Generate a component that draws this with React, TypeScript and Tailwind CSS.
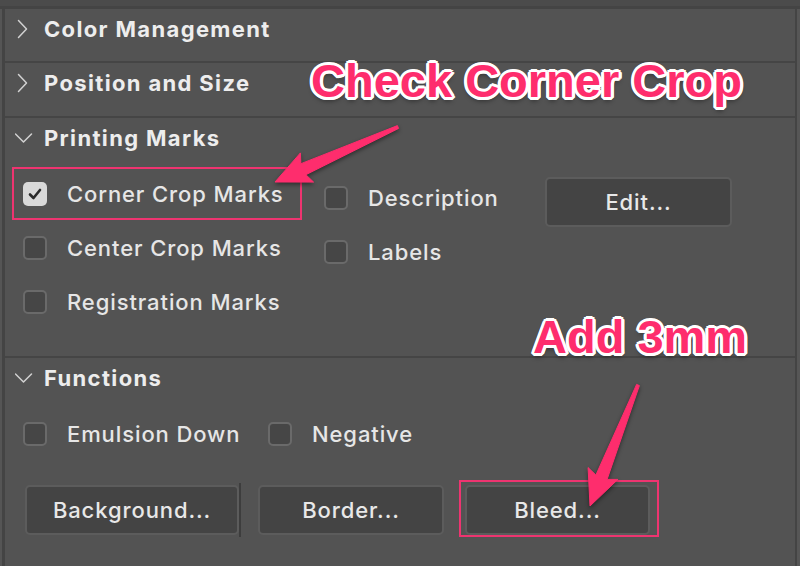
import React from "react";

function ChevronRight() {
  return (
    <svg width="22" height="22" viewBox="0 0 22 22" fill="none">
      <path d="M3.5 2.5 L11.5 11 L3.5 19.5" stroke="#d2d2d2" strokeWidth="1.5" strokeLinecap="round" strokeLinejoin="round" />
    </svg>
  );
}

function ChevronDown() {
  return (
    <svg width="22" height="22" viewBox="0 0 22 22" fill="none">
      <path d="M0.5 7 L8.5 15 L16.5 7" stroke="#d2d2d2" strokeWidth="1.5" strokeLinecap="round" strokeLinejoin="round" />
    </svg>
  );
}

function Checkbox({ checked }: { checked?: boolean }) {
  if (checked) {
    return (
      <div className="w-[24px] h-[24px] rounded-[5px] bg-[#d9d9d9] flex items-center justify-center shrink-0">
        <svg width="16" height="16" viewBox="0 0 16 16" fill="none">
          <path d="M3 8.5 L6.5 12 L13 4" stroke="#2b2b2b" strokeWidth="2.6" strokeLinecap="round" strokeLinejoin="round" />
        </svg>
      </div>
    );
  }
  return <div className="w-[24px] h-[24px] rounded-[5px] bg-[#464646] border-2 border-[#6a6a6a] shrink-0" />;
}

function CheckRow({ label, checked }: { label: string; checked?: boolean }) {
  return (
    <div className="h-[54px] flex items-center gap-[20px]">
      <Checkbox checked={checked} />
      <span className="text-[22px] tracking-[0.9px] font-[450] text-[#e6e6e6] whitespace-nowrap">{label}</span>
    </div>
  );
}

function Header({ title, open }: { title: string; open?: boolean }) {
  return (
    <div className="h-[40px] flex items-center pl-[10px]">
      <div className="w-[29px] flex items-center">{open ? <ChevronDown /> : <ChevronRight />}</div>
      <span className="text-[22px] tracking-[1.35px] font-bold text-[#ededed] whitespace-nowrap">{title}</span>
    </div>
  );
}

function Button({ label, w }: { label: string; w: string }) {
  return (
    <div className={`${w} h-[50px] rounded-[5px] bg-[#444444] border-2 border-[#5c5c5c] flex items-center justify-center text-[22px] tracking-[0.9px] font-[450] text-[#e8e8e8]`}>
      {label}
    </div>
  );
}

const outline =
  "[text-shadow:3px_0_0_#fff,-3px_0_0_#fff,0_3px_0_#fff,0_-3px_0_#fff,2px_2px_0_#fff,-2px_-2px_0_#fff,2px_-2px_0_#fff,-2px_2px_0_#fff,3px_1px_0_#fff,-3px_1px_0_#fff,1px_3px_0_#fff,-1px_3px_0_#fff,0_4px_5px_rgba(0,0,0,0.45)]";

export default function App() {
  return (
    <div className="relative w-[800px] h-[566px] overflow-hidden bg-[#535353] font-['Inter',sans-serif]">
      <div className="h-[6px] bg-[#4b4b4b]" />
      <div className="h-[3px] bg-[#444444]" />
      <div className="flex h-[557px]">
        <div className="w-[2px] bg-[#555555]" />
        <div className="w-[3px] bg-[#444444]" />
        <div className="flex-1 flex flex-col bg-[#535353]">
          {/* Color Management */}
          <div className="pb-[12px]">
            <Header title="Color Management" />
          </div>
          {/* Position and Size */}
          <div className="border-t-2 border-[#454545] pb-[13px]">
            <Header title="Position and Size" />
          </div>
          {/* Printing Marks */}
          <div className="border-t-2 border-[#454545] pb-[27px]">
            <Header title="Printing Marks" open />
            <div className="flex">
              <div className="ml-[7px] w-[290px] pl-[11px] mt-[9px] flex flex-col">
                <CheckRow label="Corner Crop Marks" checked />
                <CheckRow label="Center Crop Marks" />
                <CheckRow label="Registration Marks" />
              </div>
              <div className="ml-[22px] w-[221px] mt-[13px] flex flex-col">
                <CheckRow label="Description" />
                <CheckRow label="Labels" />
              </div>
              <div className="mt-[19px]">
                <Button label="Edit..." w="w-[187px]" />
              </div>
            </div>
          </div>
          {/* Functions */}
          <div className="border-t-2 border-[#454545]">
            <Header title="Functions" open />
            <div className="mt-[9px] flex pl-[18px]">
              <div className="w-[245px]">
                <CheckRow label="Emulsion Down" />
              </div>
              <CheckRow label="Negative" />
            </div>
            <div className="mt-[22px] flex items-center pl-[20px]">
              <Button label="Background..." w="w-[214px]" />
              <div className="w-[2px] h-[54px] bg-[#3d3d3d]" />
              <div className="ml-[17px]">
                <Button label="Border..." w="w-[186px]" />
              </div>
              <div className="ml-[21px]">
                <Button label="Bleed..." w="w-[185px]" />
              </div>
            </div>
          </div>
        </div>
        <div className="w-[2px] bg-[#444444]" />
        <div className="w-[3px] bg-[#565656]" />
      </div>

      {/* Annotations */}
      <div className="absolute left-[12px] top-[167px] w-[290px] h-[53px] border-2 border-[#ee3470] pointer-events-none" />
      <div className="absolute left-[459px] top-[480px] w-[200px] h-[57px] border-2 border-[#ee3470] pointer-events-none" />

      <div
        className={`absolute left-[311px] top-[57px] text-[47px] leading-none font-bold text-[#fe2d6d] whitespace-nowrap font-['Liberation_Sans',Arial,sans-serif] ${outline}`}
      >
        Check Corner Crop
      </div>
      <div
        className={`absolute left-[533px] top-[313px] text-[47px] leading-none font-bold text-[#fe2d6d] whitespace-nowrap font-['Liberation_Sans',Arial,sans-serif] ${outline}`}
      >
        Add 3mm
      </div>

      <svg
        className="absolute left-0 top-0 pointer-events-none drop-shadow-[0_2px_2px_rgba(0,0,0,0.45)]"
        width="800"
        height="566"
        viewBox="0 0 800 566"
      >
        <polygon
          points="398.6,128.4 305.9,174.7 313.6,182.1 275,182 300.4,152.9 300.9,163.7 397.4,125.6"
          fill="#fe2d6d"
          strokeLinejoin="round"
          stroke="#fe2d6d"
          strokeWidth="1"
        />
        <polygon
          points="639.4,385.6 607.1,479.4 617.9,479.4 590,506 588.1,467.6 595.9,475 636.6,384.4"
          fill="#fe2d6d"
          strokeLinejoin="round"
          stroke="#fe2d6d"
          strokeWidth="1"
        />
      </svg>
    </div>
  );
}
